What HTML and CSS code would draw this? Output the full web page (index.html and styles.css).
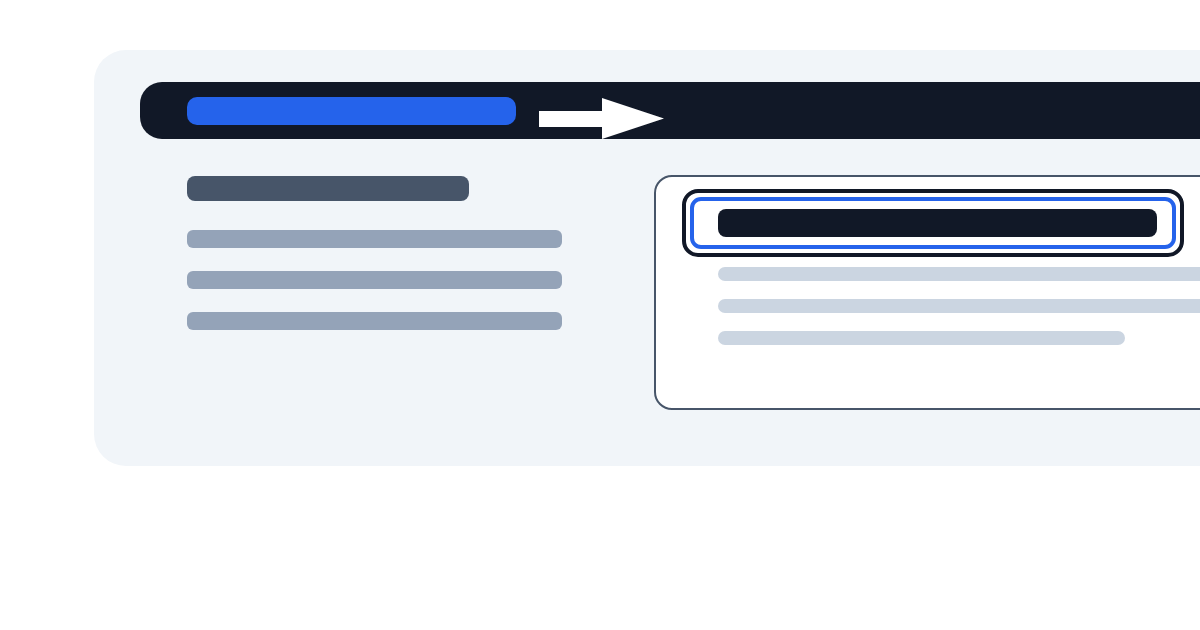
FILE: index.html
```html
<!DOCTYPE html>
<html>
<head>
<meta charset="utf-8">
<link rel="stylesheet" href="styles.css">
</head>
<body>
<div class="panel">
  <div class="topbar">
    <div class="pill"></div>
    <svg class="arrow" width="125" height="57" viewBox="0 0 125 57">
      <polygon points="0,29 63,29 63,16 125,36.5 63,57 63,45 0,45" fill="#ffffff"/>
    </svg>
  </div>
  <div class="row">
    <div class="left">
      <div class="heading"></div>
      <div class="line"></div>
      <div class="line"></div>
      <div class="line"></div>
    </div>
    <div class="card">
      <div class="hl">
        <div class="hl-inner">
          <div class="hl-bar"></div>
        </div>
      </div>
      <div class="cline first"></div>
      <div class="cline"></div>
      <div class="cline short"></div>
    </div>
  </div>
</div>
</body>
</html>
```

FILE: styles.css
```css
html, body {
  margin: 0;
  padding: 0;
  background: #ffffff;
  overflow: hidden;
  width: 1200px;
  height: 630px;
  font-family: "Liberation Sans", Arial, sans-serif;
}

.panel {
  box-sizing: border-box;
  margin: 50px 0 0 94px;
  width: 1106px;
  height: 416px;
  background: #f1f5f9;
  border-radius: 32px 0 0 32px;
  padding: 32px 0 0 46px;
  overflow: hidden;
}

.topbar {
  display: flex;
  align-items: center;
  height: 57px;
  background: #111827;
  border-radius: 22px 0 0 22px;
  padding-left: 47px;
  box-sizing: border-box;
}

.pill {
  width: 329px;
  height: 28px;
  background: #2563eb;
  border-radius: 10px;
  flex: none;
}

.arrow {
  display: block;
  margin-left: 23px;
  flex: none;
}

.row {
  display: flex;
  align-items: flex-start;
  margin-top: 36px;
  padding-left: 47px;
}

.left {
  width: 467px;
  flex: none;
  display: flex;
  flex-direction: column;
  padding-top: 1px;
}

.heading {
  width: 282px;
  height: 25px;
  background: #475569;
  border-radius: 8px;
}

.line {
  width: 375px;
  height: 18px;
  background: #94a3b8;
  border-radius: 6px;
  margin-top: 23px;
}

.heading + .line {
  margin-top: 29px;
}

.card {
  box-sizing: border-box;
  width: 620px;
  height: 235px;
  flex: none;
  background: #ffffff;
  border: 2.5px solid #475569;
  border-radius: 18px;
  padding: 11.5px 0 0 25.5px;
}

.hl {
  box-sizing: border-box;
  width: 502px;
  height: 68px;
  border: 4px solid #111827;
  border-radius: 16px;
  padding: 4px;
  background: #ffffff;
}

.hl-inner {
  box-sizing: border-box;
  height: 100%;
  border: 4px solid #2563eb;
  border-radius: 11px;
  padding: 8px 15px 8px 24px;
}

.hl-bar {
  height: 28px;
  background: #111827;
  border-radius: 8px;
}

.cline {
  margin-left: 36px;
  width: 600px;
  height: 14px;
  background: #cbd5e1;
  border-radius: 7px;
  margin-top: 18px;
}

.cline.first {
  margin-top: 10px;
}

.cline.short {
  width: 407px;
}
```
